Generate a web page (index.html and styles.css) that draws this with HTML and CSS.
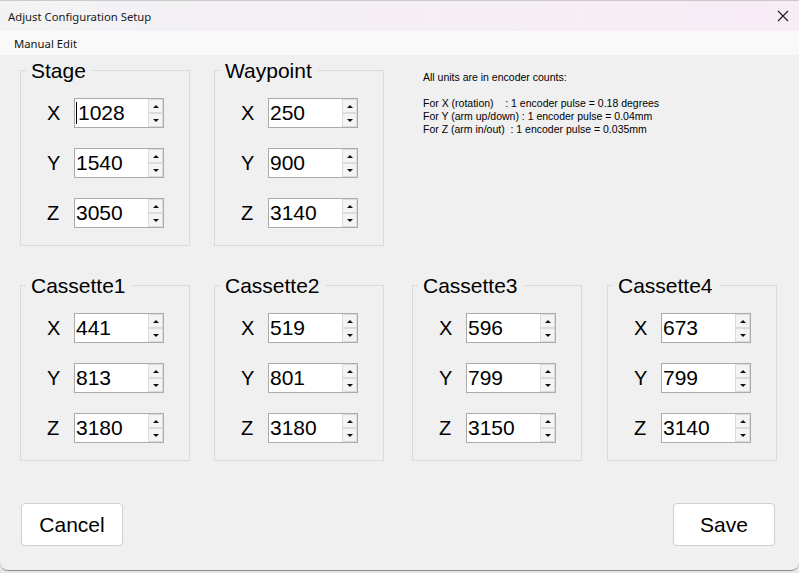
FILE: index.html
```html
<!DOCTYPE html>
<html>
<head>
<meta charset="utf-8">
<title>Adjust Configuration Setup</title>
<link rel="stylesheet" href="styles.css">
</head>
<body>
<div class="window">
  <div class="titlebar">
    <span class="title">Adjust Configuration Setup</span>
    <svg class="close" width="12" height="12" viewBox="0 0 12 12"><path d="M1 1 L11 11 M11 1 L1 11" stroke="#1a1a1a" stroke-width="1.1" fill="none"/></svg>
  </div>
  <div class="menubar"><span class="menu-item">Manual Edit</span></div>
  <div class="content">
    <div class="row row1">
      <fieldset class="group">
        <legend>Stage</legend>
        <div class="field"><span class="lbl">X</span><div class="spin"><span class="val"><span class="caret"></span>1028</span><div class="arrows"><span class="btn"><i class="up"></i></span><span class="btn"><i class="down"></i></span></div></div></div>
        <div class="field"><span class="lbl">Y</span><div class="spin"><span class="val">1540</span><div class="arrows"><span class="btn"><i class="up"></i></span><span class="btn"><i class="down"></i></span></div></div></div>
        <div class="field"><span class="lbl">Z</span><div class="spin"><span class="val">3050</span><div class="arrows"><span class="btn"><i class="up"></i></span><span class="btn"><i class="down"></i></span></div></div></div>
      </fieldset>
      <fieldset class="group g2">
        <legend>Waypoint</legend>
        <div class="field"><span class="lbl">X</span><div class="spin"><span class="val">250</span><div class="arrows"><span class="btn"><i class="up"></i></span><span class="btn"><i class="down"></i></span></div></div></div>
        <div class="field"><span class="lbl">Y</span><div class="spin"><span class="val">900</span><div class="arrows"><span class="btn"><i class="up"></i></span><span class="btn"><i class="down"></i></span></div></div></div>
        <div class="field"><span class="lbl">Z</span><div class="spin"><span class="val">3140</span><div class="arrows"><span class="btn"><i class="up"></i></span><span class="btn"><i class="down"></i></span></div></div></div>
      </fieldset>
      <div class="info">All units are in encoder counts:

For X (rotation)    : 1 encoder pulse = 0.18 degrees
For Y (arm up/down) : 1 encoder pulse = 0.04mm
For Z (arm in/out)  : 1 encoder pulse = 0.035mm</div>
    </div>
    <div class="row row2">
      <fieldset class="group">
        <legend>Cassette1</legend>
        <div class="field"><span class="lbl">X</span><div class="spin"><span class="val">441</span><div class="arrows"><span class="btn"><i class="up"></i></span><span class="btn"><i class="down"></i></span></div></div></div>
        <div class="field"><span class="lbl">Y</span><div class="spin"><span class="val">813</span><div class="arrows"><span class="btn"><i class="up"></i></span><span class="btn"><i class="down"></i></span></div></div></div>
        <div class="field"><span class="lbl">Z</span><div class="spin"><span class="val">3180</span><div class="arrows"><span class="btn"><i class="up"></i></span><span class="btn"><i class="down"></i></span></div></div></div>
      </fieldset>
      <fieldset class="group g2">
        <legend>Cassette2</legend>
        <div class="field"><span class="lbl">X</span><div class="spin"><span class="val">519</span><div class="arrows"><span class="btn"><i class="up"></i></span><span class="btn"><i class="down"></i></span></div></div></div>
        <div class="field"><span class="lbl">Y</span><div class="spin"><span class="val">801</span><div class="arrows"><span class="btn"><i class="up"></i></span><span class="btn"><i class="down"></i></span></div></div></div>
        <div class="field"><span class="lbl">Z</span><div class="spin"><span class="val">3180</span><div class="arrows"><span class="btn"><i class="up"></i></span><span class="btn"><i class="down"></i></span></div></div></div>
      </fieldset>
      <fieldset class="group g3">
        <legend>Cassette3</legend>
        <div class="field"><span class="lbl">X</span><div class="spin"><span class="val">596</span><div class="arrows"><span class="btn"><i class="up"></i></span><span class="btn"><i class="down"></i></span></div></div></div>
        <div class="field"><span class="lbl">Y</span><div class="spin"><span class="val">799</span><div class="arrows"><span class="btn"><i class="up"></i></span><span class="btn"><i class="down"></i></span></div></div></div>
        <div class="field"><span class="lbl">Z</span><div class="spin"><span class="val">3150</span><div class="arrows"><span class="btn"><i class="up"></i></span><span class="btn"><i class="down"></i></span></div></div></div>
      </fieldset>
      <fieldset class="group g4">
        <legend>Cassette4</legend>
        <div class="field"><span class="lbl">X</span><div class="spin"><span class="val">673</span><div class="arrows"><span class="btn"><i class="up"></i></span><span class="btn"><i class="down"></i></span></div></div></div>
        <div class="field"><span class="lbl">Y</span><div class="spin"><span class="val">799</span><div class="arrows"><span class="btn"><i class="up"></i></span><span class="btn"><i class="down"></i></span></div></div></div>
        <div class="field"><span class="lbl">Z</span><div class="spin"><span class="val">3140</span><div class="arrows"><span class="btn"><i class="up"></i></span><span class="btn"><i class="down"></i></span></div></div></div>
      </fieldset>
    </div>
    <div class="buttons">
      <button class="button">Cancel</button>
      <button class="button">Save</button>
    </div>
  </div>
</div>
</body>
</html>
```
FILE: styles.css
```css
* { box-sizing: border-box; }
html, body { margin: 0; padding: 0; }
body {
  width: 799px;
  height: 573px;
  overflow: hidden;
  background: #e6e6e6;
  font-family: "Liberation Sans", Arial, sans-serif;
}
.window {
  width: 799px;
  height: 571px;
  background: #f0f0f0;
  border-top: 1px solid #c9c9c9;
  border-bottom: 1px solid #8e8e8e;
  border-radius: 0 0 8px 8px;
  display: flex;
  flex-direction: column;
  overflow: hidden;
}
.titlebar {
  height: 30px;
  flex: none;
  display: flex;
  align-items: center;
  justify-content: space-between;
  padding: 0 8px 0 8px;
  background: linear-gradient(90deg, #f3f3f5 0%, #f5eff5 45%, #f8ecf6 100%);
}
.title {
  font-family: "Noto Sans", "Open Sans", sans-serif;
  font-size: 11.3px;
  color: #1b1b1b;
}
.close { margin-right: 2px; }
.menubar {
  height: 24px;
  flex: none;
  display: flex;
  align-items: center;
  padding-left: 14px;
  background: #f9f9f9;
}
.menu-item {
  font-family: "Noto Sans", "Open Sans", sans-serif;
  font-size: 11.3px;
  color: #111;
}
.content {
  flex: 1;
  padding: 0 0 0 20px;
}
.row { display: flex; align-items: flex-start; }
.row1 { padding-top: 4px; }
.row2 { margin-top: 28px; }
.group {
  width: 170px;
  margin: 0;
  padding: 16px 0 17px 0;
  border: 1px solid #dadada;
  min-width: 0;
}
.group legend {
  font-size: 21px;
  line-height: 23px;
  color: #000;
  padding: 0 6px 0 5px;
  margin-left: 5px;
}
.g2 { margin-left: 24px; }
.g3 { margin-left: 28px; }
.g4 { margin-left: 25px; }
.field {
  display: flex;
  align-items: center;
  height: 30px;
  padding-left: 26px;
}
.field + .field { margin-top: 20px; }
.lbl {
  width: 27px;
  font-size: 20px;
  line-height: 30px;
  color: #000;
}
.spin {
  width: 90px;
  height: 30px;
  border: 1px solid #ababab;
  background: #fff;
  display: flex;
}
.val {
  flex: 1;
  font-size: 21px;
  line-height: 28px;
  padding-left: 1px;
  color: #000;
  display: flex;
  align-items: center;
}
.caret {
  width: 1px;
  height: 22px;
  background: #000;
  margin-right: 1px;
}
.arrows {
  width: 15px;
  display: flex;
  flex-direction: column;
}
.btn {
  height: 14px;
  background: #f4f4f4;
  border: 1px solid #dcdcdc;
  display: flex;
  align-items: center;
  justify-content: center;
}
.up, .down {
  width: 0; height: 0;
  border-left: 3px solid transparent;
  border-right: 3px solid transparent;
}
.up { border-bottom: 3px solid #111; }
.down { border-top: 3px solid #111; }
.info {
  margin-left: 39px;
  margin-top: 12px;
  font-size: 10.5px;
  line-height: 13px;
  white-space: pre;
  color: #000;
}
.buttons {
  display: flex;
  justify-content: space-between;
  margin-top: 42px;
  padding: 0 24px 0 1px;
}
.button {
  width: 102px;
  height: 43px;
  background: #fff;
  border: 1px solid #cfcfcf;
  border-radius: 4px;
  font-family: "Liberation Sans", Arial, sans-serif;
  font-size: 21px;
  color: #000;
  padding: 0;
}
```
